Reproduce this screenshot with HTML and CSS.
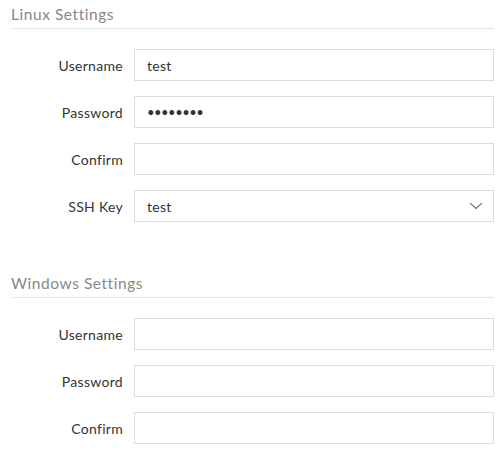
FILE: index.html
```html
<!DOCTYPE html>
<html>
<head>
<meta charset="utf-8">
<link rel="stylesheet" href="styles.css">
</head>
<body>
<div class="page">
  <section class="group">
    <h2 class="group-title">Linux Settings</h2>
    <div class="row">
      <label class="label">Username</label>
      <input class="field" type="text" value="test">
    </div>
    <div class="row">
      <label class="label">Password</label>
      <input class="field field-secret" type="password" value="12345678">
    </div>
    <div class="row">
      <label class="label">Confirm</label>
      <input class="field field-secret" type="password" value="">
    </div>
    <div class="row">
      <label class="label">SSH Key</label>
      <div class="select">
        <span class="select-value">test</span>
        <svg class="chevron" width="14" height="8" viewBox="0 0 14 8"><path d="M1 1.2 L7 6.5 L13 1.2" fill="none" stroke="#666" stroke-width="1.1"/></svg>
      </div>
    </div>
  </section>
  <section class="group group-second">
    <h2 class="group-title">Windows Settings</h2>
    <div class="row">
      <label class="label">Username</label>
      <input class="field" type="text" value="">
    </div>
    <div class="row">
      <label class="label">Password</label>
      <input class="field field-secret" type="password" value="">
    </div>
    <div class="row">
      <label class="label">Confirm</label>
      <input class="field field-secret" type="password" value="">
    </div>
  </section>
</div>
</body>
</html>
```

FILE: styles.css
```css
* { box-sizing: border-box; }
html, body { margin: 0; padding: 0; background: #fff; }
body { font-family: Lato, "Open Sans", sans-serif; color: #333; }
.page { padding: 0 8px 0 11px; }
.group-title {
  margin: 0;
  font-size: 15.5px;
  letter-spacing: 0.55px;
  font-weight: 400;
  color: #888;
  line-height: 20px;
  padding-top: 4px;
  height: 29px;
  border-bottom: 1px solid #e3e3e3;
}
.group-second { margin-top: 47px; }
.group-title + .row { margin-top: 20px; }
.row {
  display: flex;
  align-items: center;
  gap: 11px;
  margin-bottom: 15px;
}
.label {
  width: 112px;
  text-align: right;
  font-size: 14px;
  letter-spacing: 0.3px;
  color: #333;
}
.field, .select {
  flex: 1;
  height: 32px;
  border: 1px solid #dcdcdc;
  border-radius: 0;
  padding: 0 12px;
  font-family: inherit;
  font-size: 14px;
  letter-spacing: 0.3px;
  color: #333;
  background: #fff;
  outline: none;
}
.field-secret {
  font-size: 13px;
  letter-spacing: -0.5px;
}
.select {
  display: flex;
  align-items: center;
  justify-content: space-between;
  padding-right: 10px;
}
.chevron { display: block; }
```
